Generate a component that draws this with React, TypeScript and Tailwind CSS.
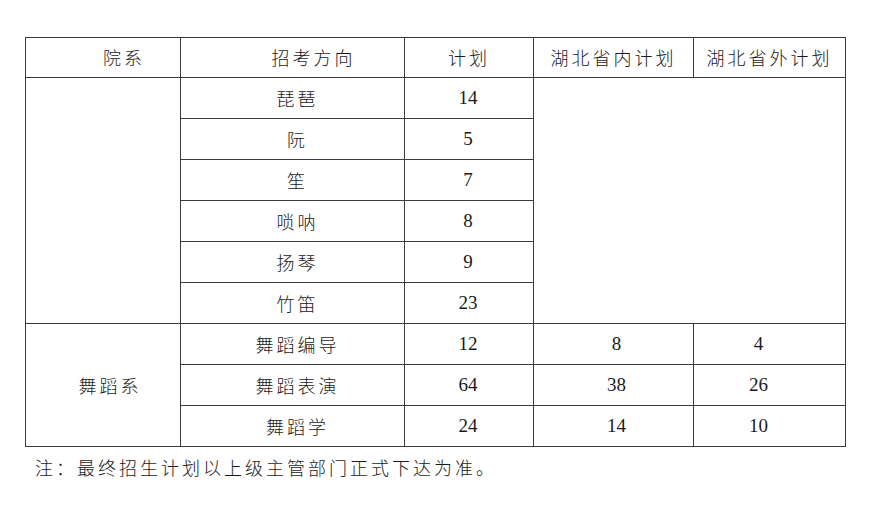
const rows1 = [
  { name: "琵琶", plan: "14" },
  { name: "阮", plan: "5" },
  { name: "笙", plan: "7" },
  { name: "唢呐", plan: "8" },
  { name: "扬琴", plan: "9" },
  { name: "竹笛", plan: "23" },
];

const rows2 = [
  { name: "舞蹈编导", plan: "12", inner: "8", outer: "4" },
  { name: "舞蹈表演", plan: "64", inner: "38", outer: "26" },
  { name: "舞蹈学", plan: "24", inner: "14", outer: "10" },
];

const cjk = "font-['Noto_Sans_CJK_SC',sans-serif] text-[18px] tracking-[3px] font-light";
const num = "font-['Liberation_Serif',serif] text-[19px]";
const cell = "border border-[#3a3a3a] p-0 text-center align-middle text-[#1a1a1a]";

export default function App() {
  return (
    <div className="w-[872px] h-[511px] bg-white pt-[37px] pl-[25px]">
      <table className="border-collapse table-fixed w-[820px]">
        <colgroup>
          <col className="w-[155px]" />
          <col className="w-[224px]" />
          <col className="w-[129px]" />
          <col className="w-[160px]" />
          <col className="w-[152px]" />
        </colgroup>
        <thead>
          <tr className="h-[40px]">
            <th className={`${cell} ${cjk} font-light pl-[42px]`}>院系</th>
            <th className={`${cell} ${cjk} font-light pl-[42px]`}>招考方向</th>
            <th className={`${cell} ${cjk} font-light`}>计划</th>
            <th className={`${cell} ${cjk} font-light`}>湖北省内计划</th>
            <th className={`${cell} ${cjk} font-light`}>湖北省外计划</th>
          </tr>
        </thead>
        <tbody>
          {rows1.map((r, i) => (
            <tr key={r.name} className="h-[41px]">
              {i === 0 && <td rowSpan={6} className={cell}></td>}
              <td className={`${cell} ${cjk} pl-[10px]`}>{r.name}</td>
              <td className={`${cell} ${num} pr-[2px]`}>{r.plan}</td>
              {i === 0 && <td rowSpan={6} colSpan={2} className={cell}></td>}
            </tr>
          ))}
          {rows2.map((r, i) => (
            <tr key={r.name} className="h-[41px]">
              {i === 0 && (
                <td rowSpan={3} className={`${cell} ${cjk} pl-[14px]`}>
                  舞蹈系
                </td>
              )}
              <td className={`${cell} ${cjk} pl-[10px]`}>{r.name}</td>
              <td className={`${cell} ${num} pr-[2px]`}>{r.plan}</td>
              <td className={`${cell} ${num} pl-[6px]`}>{r.inner}</td>
              <td className={`${cell} ${num} pr-[22px]`}>{r.outer}</td>
            </tr>
          ))}
        </tbody>
      </table>
      <p className={`${cjk} text-[#1a1a1a] mt-[8px] ml-[10px] leading-[24px]`}>
        注：最终招生计划以上级主管部门正式下达为准。
      </p>
    </div>
  );
}
